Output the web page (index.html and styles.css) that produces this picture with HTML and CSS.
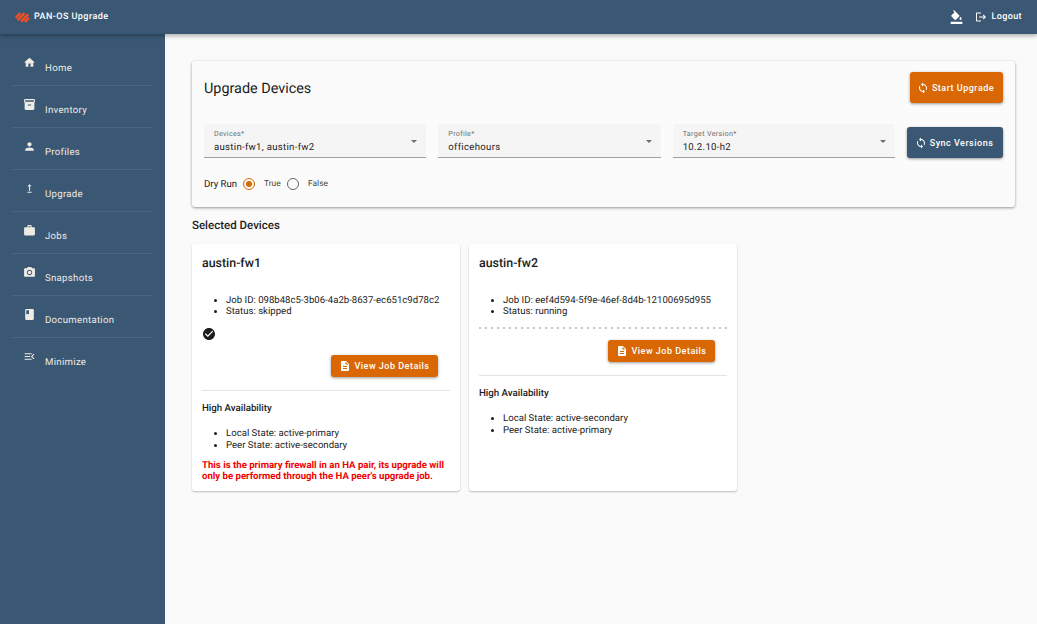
FILE: index.html
```html
<!DOCTYPE html>
<html>
<head>
	<meta charset="utf-8">
	<title>PAN-OS Upgrade</title>
	<link rel="stylesheet" href="styles.css">
</head>
<body>
	<!-- top bar -->
	<header class="topbar">
		<svg class="logo" viewBox="0 0 15 11"><path d="M4.2 0.2l1.9 1.8-4.4 4.4-1.7-1.6zM8.6 0.2l1.9 1.8-7 7-1.9-1.8zM12.2 1.6l1.9 1.8-7 7-1.9-1.8zM13.2 5.2l1.8 1.5-4.2 4.1-1.8-1.7z" fill="#f04e23"/></svg>
		<span class="brand">PAN-OS Upgrade</span>
		<span class="spacer"></span>
		<svg class="top-icon paint" viewBox="0 0 24 24"><path d="M16.56 8.94L7.62 0 6.21 1.41l2.38 2.38-5.15 5.15c-.59.59-.59 1.54 0 2.12l5.5 5.5c.29.29.68.44 1.06.44s.77-.15 1.06-.44l5.5-5.5c.59-.58.59-1.53 0-2.12zM19 11.5s-2 2.17-2 3.5c0 1.1.9 2 2 2s2-.9 2-2c0-1.33-2-3.5-2-3.5zM2 20h20v4H2z"/></svg>
		<svg class="top-icon" viewBox="0 0 24 24"><path d="M17 7l-1.41 1.41L18.17 11H8v2h10.17l-2.58 2.58L17 17l5-5zM4 5h8V3H4c-1.1 0-2 .9-2 2v14c0 1.1.9 2 2 2h8v-2H4V5z"/></svg>
		<span class="logout">Logout</span>
	</header>

	<div class="layout">
		<!-- side menu -->
		<nav class="sidebar">
			<a class="nav-item"><svg viewBox="0 0 24 24"><path d="M10 20v-6h4v6h5v-8h3L12 3 2 12h3v8z"/></svg><span>Home</span></a>
			<a class="nav-item"><svg viewBox="0 0 24 24"><path d="M20 2H4c-1 0-2 .9-2 2v3.01c0 .72.43 1.34 1 1.69V20c0 1.1 1.1 2 2 2h14c.9 0 2-.9 2-2V8.7c.57-.35 1-.97 1-1.69V4c0-1.1-1-2-2-2zm-5 12H9v-2h6v2zm5-7H4V4l16-.02V7z"/></svg><span>Inventory</span></a>
			<a class="nav-item"><svg viewBox="0 0 24 24"><path d="M12 12c2.21 0 4-1.79 4-4s-1.79-4-4-4-4 1.79-4 4 1.79 4 4 4zm0 2c-2.67 0-8 1.34-8 4v2h16v-2c0-2.66-5.33-4-8-4z"/></svg><span>Profiles</span></a>
			<a class="nav-item"><svg viewBox="0 0 24 24"><path d="M16 18v2H8v-2h8zM11 7.99V16h2V7.99h3L12 4 8 7.99h3z"/></svg><span>Upgrade</span></a>
			<a class="nav-item"><svg viewBox="0 0 24 24"><path d="M20 6h-4V4c0-1.11-.89-2-2-2h-4c-1.11 0-2 .89-2 2v2H4c-1.11 0-1.99.89-1.99 2L2 19c0 1.11.89 2 2 2h16c1.11 0 2-.89 2-2V8c0-1.11-.89-2-2-2zm-6 0h-4V4h4v2z"/></svg><span>Jobs</span></a>
			<a class="nav-item"><svg viewBox="0 0 24 24"><circle cx="12" cy="12" r="3.2"/><path d="M9 2L7.17 4H4c-1.1 0-2 .9-2 2v12c0 1.1.9 2 2 2h16c1.1 0 2-.9 2-2V6c0-1.1-.9-2-2-2h-3.17L15 2H9zm3 15c-2.76 0-5-2.24-5-5s2.24-5 5-5 5 2.24 5 5-2.24 5-5 5z"/></svg><span>Snapshots</span></a>
			<a class="nav-item"><svg viewBox="0 0 24 24"><path d="M18 2H6c-1.1 0-2 .9-2 2v16c0 1.1.9 2 2 2h12c1.1 0 2-.9 2-2V4c0-1.1-.9-2-2-2zM6 4h5v8l-2.5-1.5L6 12V4z"/></svg><span>Documentation</span></a>
			<a class="nav-item"><svg viewBox="0 0 24 24"><path d="M3 18h13v-2H3v2zm0-5h10v-2H3v2zm0-7v2h13V6H3zm18 9.59L17.42 12 21 8.41 19.59 7l-5 5 5 5L21 15.59z"/></svg><span>Minimize</span></a>
		</nav>

		<main class="content">
			<section class="panel">
				<div class="panel-head">
					<h1>Upgrade Devices</h1>
					<button class="btn btn-orange btn-start"><svg viewBox="0 0 24 24"><path d="M12 4V1L8 5l4 4V6c3.31 0 6 2.69 6 6 0 1.01-.25 1.97-.7 2.8l1.46 1.46C19.54 15.03 20 13.57 20 12c0-4.42-3.58-8-8-8zm0 14c-3.31 0-6-2.69-6-6 0-1.01.25-1.97.7-2.8L5.24 7.74C4.46 8.97 4 10.43 4 12c0 4.42 3.58 8 8 8v3l4-4-4-4v3z"/></svg>Start Upgrade</button>
				</div>
				<div class="fields">
					<div class="field"><label>Devices*</label><div class="value">austin-fw1, austin-fw2</div><i class="caret"></i></div>
					<div class="field"><label>Profile*</label><div class="value">officehours</div><i class="caret"></i></div>
					<div class="field"><label>Target Version*</label><div class="value">10.2.10-h2</div><i class="caret"></i></div>
					<button class="btn btn-blue"><svg viewBox="0 0 24 24"><path d="M12 4V1L8 5l4 4V6c3.31 0 6 2.69 6 6 0 1.01-.25 1.97-.7 2.8l1.46 1.46C19.54 15.03 20 13.57 20 12c0-4.42-3.58-8-8-8zm0 14c-3.31 0-6-2.69-6-6 0-1.01.25-1.97.7-2.8L5.24 7.74C4.46 8.97 4 10.43 4 12c0 4.42 3.58 8 8 8v3l4-4-4-4v3z"/></svg>Sync Versions</button>
				</div>
				<div class="dryrun">
					<span class="dry-label">Dry Run</span>
					<i class="radio radio-on"></i><span class="radio-text">True</span>
					<i class="radio"></i><span class="radio-text">False</span>
				</div>
			</section>

			<h2 class="section-title">Selected Devices</h2>

			<div class="devices">
				<article class="device">
					<h3>austin-fw1</h3>
					<ul>
						<li>Job ID: 098b48c5-3b06-4a2b-8637-ec651c9d78c2</li>
						<li>Status: skipped</li>
					</ul>
					<svg class="check" viewBox="2 2 20 20"><path d="M12 2C6.48 2 2 6.48 2 12s4.48 10 10 10 10-4.48 10-10S17.52 2 12 2zm-2 15l-5-5 1.41-1.41L10 14.17l7.59-7.59L19 8l-9 9z"/></svg>
					<div class="actions actions-skipped">
						<button class="btn btn-orange btn-job"><svg viewBox="0 0 24 24"><path d="M14 2H6c-1.1 0-1.99.9-1.99 2L4 20c0 1.1.89 2 1.99 2H18c1.1 0 2-.9 2-2V8l-6-6zm2 16H8v-2h8v2zm0-4H8v-2h8v2zm-3-5V3.5L18.5 9H13z"/></svg>View Job Details</button>
					</div>
					<hr>
					<h4>High Availability</h4>
					<ul class="ha-list">
						<li>Local State: active-primary</li>
						<li>Peer State: active-secondary</li>
					</ul>
					<p class="warning">This is the primary firewall in an HA pair, its upgrade will only be performed through the HA peer's upgrade job.</p>
				</article>

				<article class="device">
					<h3>austin-fw2</h3>
					<ul>
						<li>Job ID: eef4d594-5f9e-46ef-8d4b-12100695d955</li>
						<li>Status: running</li>
					</ul>
					<div class="dots"></div>
					<div class="actions">
						<button class="btn btn-orange btn-job"><svg viewBox="0 0 24 24"><path d="M14 2H6c-1.1 0-1.99.9-1.99 2L4 20c0 1.1.89 2 1.99 2H18c1.1 0 2-.9 2-2V8l-6-6zm2 16H8v-2h8v2zm0-4H8v-2h8v2zm-3-5V3.5L18.5 9H13z"/></svg>View Job Details</button>
					</div>
					<hr>
					<h4>High Availability</h4>
					<ul class="ha-list">
						<li>Local State: active-secondary</li>
						<li>Peer State: active-primary</li>
					</ul>
				</article>
			</div>
		</main>
	</div>
</body>
</html>
```

FILE: styles.css
```css
* {
	margin: 0;
	padding: 0;
	box-sizing: border-box;
}
body {
	height: 624px;
	overflow: hidden;
	font-family: Roboto, "Liberation Sans", sans-serif;
	text-rendering: geometricPrecision;
	background-color: #fafafa;
	color: #1c1c1c;
}
svg {
	fill: currentColor;
	flex: none;
}

/* top bar */
.topbar {
	position: relative;
	z-index: 2;
	display: flex;
	align-items: center;
	height: 34px;
	padding: 0 15px;
	background-color: #3a5874;
	color: #fff;
	box-shadow: 0 2px 4px rgba(0, 0, 0, .3);
}
.logo {
	width: 15px;
	height: 11px;
	margin-right: 4px;
}
.brand {
	font-size: 9px;
	font-weight: 500;
	letter-spacing: .45px;
}
.spacer {
	flex: 1;
}
.top-icon {
	width: 12px;
	height: 12px;
}
.paint {
	width: 15px;
	height: 14px;
	margin-right: 11px;
}
.logout {
	margin-left: 4px;
	font-size: 9px;
	font-weight: 500;
	letter-spacing: .4px;
}

.layout {
	display: flex;
	height: 590px;
}

/* side menu */
.sidebar {
	flex: none;
	width: 165px;
	padding: 10px 13px 0 12px;
	background-color: #3a5874;
}
.nav-item {
	display: flex;
	gap: 9.5px;
	height: 42px;
	padding: 12px 0 0 10.5px;
	border-bottom: 1px solid #466685;
	color: #f0ebe4;
	font-size: 9.6px;
	letter-spacing: .3px;
}
.nav-item:last-child {
	border-bottom: none;
}
.nav-item svg {
	width: 13px;
	height: 13px;
}
.nav-item span {
	padding-top: 7px;
}

/* main area */
.content {
	flex: 1;
	padding: 27px 22px 0 27px;
}
.panel {
	height: 146px;
	padding: 11px 12px;
	background-color: #fbfbfb;
	border-radius: 3px;
	box-shadow: 0 1px 3px rgba(0, 0, 0, .4);
}
.panel-head {
	display: flex;
	align-items: center;
	justify-content: space-between;
	height: 31px;
}
h1 {
	padding-top: 1px;
	font-size: 14.4px;
	font-weight: 400;
}
.btn {
	display: flex;
	align-items: center;
	justify-content: center;
	gap: 3px;
	padding: 0 2px 0 0;
	border: none;
	border-radius: 3px;
	color: #fff;
	font-family: inherit;
	font-size: 9px;
	font-weight: 500;
	letter-spacing: .5px;
	box-shadow: 0 1px 3px rgba(0, 0, 0, .4);
}
.btn svg {
	width: 12px;
	height: 12px;
}
.btn-orange {
	background-color: #d96704;
}
.btn-blue {
	flex: none;
	width: 96px;
	height: 31px;
	margin-top: 3px;
	background-color: #3a5874;
}
.btn-start {
	width: 93px;
	height: 31px;
}
.btn-job {
	width: 107px;
	height: 22px;
	padding: 0;
}
.fields {
	display: flex;
	gap: 12px;
	margin-top: 21px;
}
.field {
	position: relative;
	flex: 1;
	height: 34px;
	padding: 5px 10px 0;
	background-color: #f5f5f5;
	border-bottom: 1px solid #a0a0a0;
	border-radius: 3px 3px 0 0;
}
.field label {
	display: block;
	color: #6e6e6e;
	font-size: 7.2px;
	letter-spacing: .3px;
	line-height: 9px;
}
.value {
	margin-top: 3px;
	font-size: 9.6px;
	letter-spacing: .3px;
	line-height: 13px;
}
.caret {
	position: absolute;
	top: 16px;
	right: 9px;
	border-left: 3.5px solid transparent;
	border-right: 3.5px solid transparent;
	border-top: 3.5px solid #6e6e6e;
}
.dryrun {
	display: flex;
	align-items: center;
	margin-top: 19px;
	height: 14px;
	font-size: 9.6px;
}
.dry-label {
	margin-right: 6px;
}
.radio {
	position: relative;
	flex: none;
	width: 12px;
	height: 12px;
	border: 1px solid #666;
	border-radius: 50%;
}
.radio-on {
	border-color: #d96704;
}
.radio-on::after {
	content: "";
	position: absolute;
	top: 2px;
	left: 2px;
	width: 6px;
	height: 6px;
	border-radius: 50%;
	background-color: #d96704;
}
.radio-text {
	width: 32px;
	padding-left: 9px;
	color: #444;
	font-size: 8.4px;
}
.section-title {
	margin-top: 11px;
	font-size: 11.5px;
	font-weight: 500;
	line-height: 14px;
}

/* device cards */
.devices {
	display: flex;
	gap: 9px;
	margin-top: 12px;
}
.device {
	width: 268px;
	height: 247px;
	padding: 12px 10px;
	background-color: #fff;
	border-radius: 3px;
	box-shadow: 0 1px 2px rgba(0, 0, 0, .25);
	font-size: 9.6px;
}
h3 {
	font-size: 12.4px;
	font-weight: 500;
	line-height: 15px;
}
ul {
	margin-top: 23.5px;
	padding-left: 24px;
	line-height: 11.5px;
}
.check {
	display: block;
	width: 12px;
	height: 12px;
	margin: 10.5px 0 0 1px;
}
.dots {
	height: 2px;
	margin-top: 9.5px;
	background-image: radial-gradient(circle, #c4c8cc 1px, transparent 1.2px);
	background-position: -2px 0;
	background-size: 6px 2px;
}
.actions {
	display: flex;
	justify-content: flex-end;
	margin-top: 11px;
	padding-right: 12px;
}
.actions-skipped {
	margin-top: 15px;
}
hr {
	margin-top: 12.5px;
	border: none;
	border-top: 1px solid #e4e4e4;
}
h4 {
	margin-top: 12.5px;
	font-size: 9.7px;
	font-weight: 500;
	line-height: 12px;
}
.ha-list {
	margin-top: 13px;
}
.warning {
	margin-top: 8.5px;
	color: #f00000;
	font-weight: 700;
	line-height: 11.5px;
}
```
